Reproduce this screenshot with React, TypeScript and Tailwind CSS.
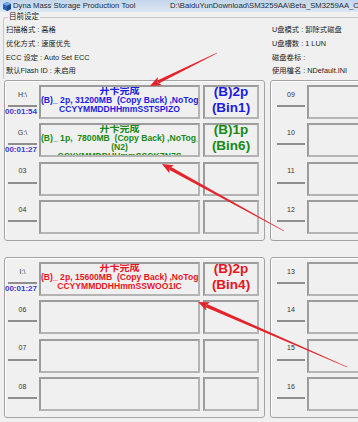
import React from "react";

type Slot = {
  label: string;
  time?: string;
  color?: string;
  lines?: string[];
  bin?: string[];
};

const BLUE = "text-[#1c1ce0]";
const GREEN = "text-[#178a17]";
const RED = "text-[#e8141e]";

const groupOneLeft: Slot[] = [
  {
    label: "H:\\",
    time: "00:01:54",
    color: BLUE,
    lines: ["(B)_ 2p, 31200MB  (Copy Back) ,NoTog", "CCYYMMDDHHmmSSTSPIZO"],
    bin: ["(B)2p", "(Bin1)"],
  },
  {
    label: "G:\\",
    time: "00:01:27",
    color: GREEN,
    lines: ["(B)_ 1p,  7800MB  (Copy Back) ,NoTog_", "(N2)", "CCYYMMDDHHmmSSCKZN7S"],
    bin: ["(B)1p", "(Bin6)"],
  },
  { label: "03" },
  { label: "04" },
];

const groupTwoLeft: Slot[] = [
  {
    label: "I:\\",
    time: "00:01:27",
    color: RED,
    lines: ["(B)_ 2p, 15600MB  (Copy Back) ,NoTog", "CCYYMMDDHHmmSSWOO1IC"],
    bin: ["(B)2p", "(Bin4)"],
  },
  { label: "06" },
  { label: "07" },
  { label: "08" },
];

const groupOneRight = ["09", "10", "11", "12"];
const groupTwoRight = ["13", "14", "15", "16"];

const boxBorder =
  "border-2 border-t-[#9c9c9c] border-l-[#9c9c9c] border-r-[#b4b4b4] border-b-[#b4b4b4] bg-[#f0f0f0]";

function Tab({ label, time, width }: { label: string; time?: string; width: string }) {
  return (
    <div className={`${width} shrink-0 flex flex-col`}>
      <div className="h-[22px] border-b-2 border-[#8e8e8e] flex items-center justify-center text-[7px] text-[#333]">
        {label}
      </div>
      {time && (
        <div className="flex justify-end whitespace-nowrap text-[8px] font-bold leading-[10px] text-[#3a3ad8]">
          {time}
        </div>
      )}
    </div>
  );
}

function SlotRow({ slot }: { slot: Slot }) {
  return (
    <div className="flex h-[34px]">
      <Tab label={slot.label} time={slot.time} width="w-[29px]" />
      <div className={`ml-[2px] w-[161px] h-full overflow-hidden text-center ${boxBorder} ${slot.color ?? ""}`}>
        {slot.lines && (
          <>
            <div className="text-[10px] font-bold leading-[8.5px] whitespace-pre">开卡完成</div>
            {slot.lines.map((l, i) => (
              <div key={i} className="text-[8.6px] font-bold leading-[9px] whitespace-pre">
                {l}
              </div>
            ))}
          </>
        )}
      </div>
      <div className={`ml-[3px] w-[56px] h-full text-center ${boxBorder} ${slot.color ?? ""}`}>
        {slot.bin && (
          <div className="-mt-[3px] text-[13.5px] font-bold leading-[16px]">
            {slot.bin.map((b) => (
              <div key={b}>{b}</div>
            ))}
          </div>
        )}
      </div>
    </div>
  );
}

function RightRow({ label }: { label: string }) {
  return (
    <div className="flex h-[34px]">
      <Tab label={label} width="w-[28px]" />
      <div className={`ml-[2px] w-[161px] shrink-0 h-full ${boxBorder}`} />
    </div>
  );
}

const panel =
  "shrink-0 h-[161px] border border-[#a3a3a3] rounded-[3px] shadow-[inset_1px_1px_0_#ffffff] pt-[4px] flex flex-col gap-[4.33px]";

function Group({ left, right, className }: { left: Slot[]; right: string[]; className: string }) {
  return (
    <div className={`flex ${className}`}>
      <div className={`ml-[4px] w-[261px] pl-[3px] ${panel}`}>
        {left.map((s) => (
          <SlotRow key={s.label} slot={s} />
        ))}
      </div>
      <div className={`ml-[5px] w-[100px] pl-[6px] overflow-hidden ${panel}`}>
        {right.map((l) => (
          <RightRow key={l} label={l} />
        ))}
      </div>
    </div>
  );
}

function arrow(tx: number, ty: number, px: number, py: number) {
  const dx = px - tx;
  const dy = py - ty;
  const len = Math.hypot(dx, dy);
  const ux = dx / len;
  const uy = dy / len;
  const nx = -uy;
  const ny = ux;
  const hl = 11;
  const hw = 4.6;
  const sw = 1.7;
  const tw = 0.3;
  const bx = px - ux * hl;
  const by = py - uy * hl;
  const p = (x: number, y: number) => `${x.toFixed(1)},${y.toFixed(1)}`;
  const shaft = [
    p(tx + nx * tw, ty + ny * tw),
    p(bx + ux * 2 + nx * sw, by + uy * 2 + ny * sw),
    p(bx + ux * 2 - nx * sw, by + uy * 2 - ny * sw),
    p(tx - nx * tw, ty - ny * tw),
  ].join(" ");
  const head = [
    p(bx + nx * hw, by + ny * hw),
    p(px, py),
    p(bx - nx * hw, by - ny * hw),
    p(bx + ux * 2.5, by + uy * 2.5),
  ].join(" ");
  return { shaft, head };
}

const arrows = [arrow(217, 53, 150, 86), arrow(284, 231, 162, 164), arrow(347, 367, 198, 302)];

export default function App() {
  return (
    <div className="relative w-[358px] h-[422px] overflow-hidden bg-[#f0f0f0] text-[#222] font-['Liberation_Sans','Noto_Sans_CJK_SC',sans-serif]">
      {/* title bar */}
      <div className="h-[12px] flex items-center bg-gradient-to-b from-[#c3d6ec] to-[#dce7f3] whitespace-nowrap text-[7.7px] text-[#1e2a3a]">
        <svg width="8" height="9" viewBox="0 0 8 9" className="ml-[3px] shrink-0">
          <path d="M4 0 L8 2 L8 7 L4 9 L0 7 L0 2 Z" fill="#2a5fb0" />
          <path d="M4 0 L8 2 L4 4 L0 2 Z" fill="#6fa3e6" />
          <path d="M4 4 L8 2 L8 7 L4 9 Z" fill="#1b4890" />
        </svg>
        <span className="ml-[2px] w-[157px] shrink-0">Dyna Mass Storage Production Tool</span>
        <span>D:\BaiduYunDownload\SM3259AA\Beta_SM3259AA_O101</span>
      </div>

      {/* settings */}
      <fieldset className="ml-[3px] h-[67px] border-l border-t border-[#c9c9c9] rounded-tl-[3px]">
        <legend className="ml-[4px] px-[1px] text-[7.5px] leading-[10px]">目前设定</legend>
        <div className="flex pt-[2px] pl-[2px] text-[7.3px]">
          <div className="w-[266px] flex flex-col">
            <div className="h-[13.67px] flex items-center">扫描格式 : 高格</div>
            <div className="h-[13.67px] flex items-center">优化方式 : 速度优先</div>
            <div className="h-[13.67px] flex items-center">ECC 设定 : Auto Set ECC</div>
            <div className="h-[13.67px] flex items-center">默认Flash ID : 未启用</div>
          </div>
          <div className="flex flex-col whitespace-nowrap">
            <div className="h-[13.67px] flex items-center">U盘模式 : 卸除式磁盘</div>
            <div className="h-[13.67px] flex items-center">U盘槽数 : 1 LUN</div>
            <div className="h-[13.67px] flex items-center">磁盘卷标 :</div>
            <div className="h-[13.67px] flex items-center">使用檔名 : NDefault.INI</div>
          </div>
        </div>
      </fieldset>

      <Group left={groupOneLeft} right={groupOneRight} className="mt-[1px]" />
      <Group left={groupTwoLeft} right={groupTwoRight} className="mt-[16px]" />

      {/* red annotation arrows */}
      <svg className="absolute inset-0 pointer-events-none" width="358" height="422">
        {arrows.map((a, i) => (
          <g key={i} fill="#e4232a">
            <polygon points={a.shaft} />
            <polygon points={a.head} />
          </g>
        ))}
      </svg>
    </div>
  );
}
